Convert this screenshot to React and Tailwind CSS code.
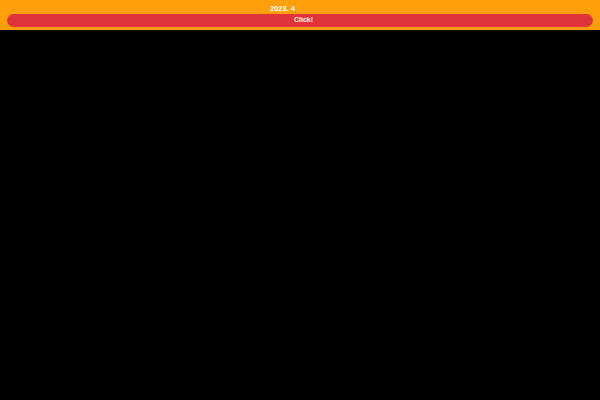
// Bandeau daté avec bouton
const App = () => {
    return (
        <div
            className="min-h-[400px] w-full bg-black"
            style={{ fontFamily: '"Liberation Sans", Arial, sans-serif' }}
        >
            <header className="bg-[#ff9f0a] px-[7px] pt-[4px] pb-[3px]">
                <div className="flex justify-center">
                    <span className="mr-[35px] text-[7.5px] leading-[9px] font-bold text-white">
                        2023. 4
                    </span>
                </div>
                <button
                    type="button"
                    className="mt-[1px] flex h-[13px] w-full items-center justify-center rounded-full bg-[#e0343a] pl-[7px] text-[7px] font-bold text-white"
                >
                    Click!
                </button>
            </header>
        </div>
    );
};

export default App;
